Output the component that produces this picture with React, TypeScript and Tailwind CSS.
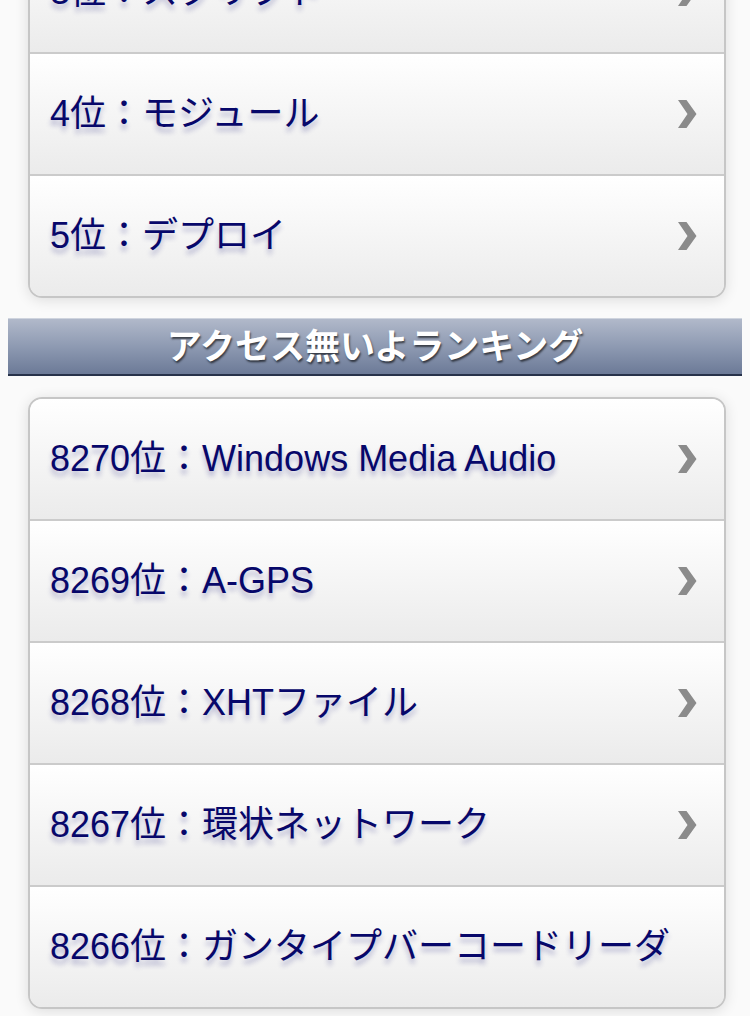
import * as React from "react"

const TOP_ROWS = ["3位：スクリプト", "4位：モジュール", "5位：デプロイ"]

const LEAST_ROWS = [
    { label: "8270位：Windows Media Audio", link: true },
    { label: "8269位：A-GPS", link: true },
    { label: "8268位：XHTファイル", link: true },
    { label: "8267位：環状ネットワーク", link: true },
    { label: "8266位：ガンタイプバーコードリーダ", link: false },
]

function Chevron() {
    return (
        <svg width="20" height="32" viewBox="0 0 20 32" className="shrink-0">
            <polygon points="1,2 9.5,2 19.5,16 9.5,30 1,30 10.5,16" fill="#8b8b8b" />
        </svg>
    )
}

function Row({ label, link, first }: { label: string; link: boolean; first?: boolean }) {
    return (
        <div
            className={`flex items-center justify-between bg-gradient-to-b from-white to-[#ebebeb] pl-5 pr-[27px] ${first ? "h-[120px]" : "h-[122px] border-t-2 border-[#cbcbcb]"}`}
        >
            <span className="text-[36px] leading-none text-[#07076a] [text-shadow:0_5px_5px_rgba(40,40,130,0.3)]">
                {label}
            </span>
            {link && <Chevron />}
        </div>
    )
}

export default function App() {
    return (
        <div
            className="flex h-[1016px] flex-col overflow-hidden bg-[#fafafa]"
            style={{ fontFamily: '"Liberation Sans", "Noto Sans CJK JP", sans-serif' }}
        >
            {/* Previous ranking card, scrolled past its top */}
            <div className="ml-7 mr-6 -mt-[70px] overflow-hidden rounded-[14px] border-2 border-[#c6c6c6] shadow-[0_2px_14px_rgba(0,0,0,0.12)]">
                {TOP_ROWS.map((r, i) => (
                    <Row key={i} label={r} link first={i === 0} />
                ))}
            </div>

            {/* Section header */}
            <div className="mx-2 mt-[20px] flex h-[58px] items-center justify-center border-t border-b-2 border-t-[#cfd4de] border-b-[#27324a] bg-gradient-to-b from-[#b1b9ca] via-[#8e9ab2] to-[#6c7a97]">
                <h2 className="text-[35px] font-bold leading-none text-white [text-shadow:1px_2px_2px_rgba(0,0,0,0.6)]">
                    アクセス無いよランキング
                </h2>
            </div>

            {/* Least accessed ranking */}
            <div className="ml-7 mr-6 mt-[21px] overflow-hidden rounded-[14px] border-2 border-[#c6c6c6] shadow-[0_2px_14px_rgba(0,0,0,0.12)]">
                {LEAST_ROWS.map((r, i) => (
                    <Row key={i} label={r.label} link={r.link} first={i === 0} />
                ))}
            </div>
        </div>
    )
}
